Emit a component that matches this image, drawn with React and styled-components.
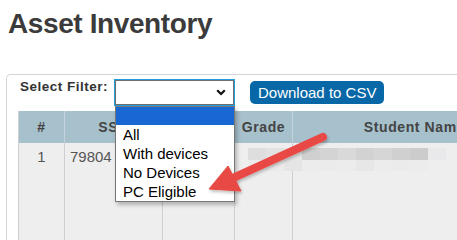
import React from "react";
import styled, { createGlobalStyle } from "styled-components";

const Global = createGlobalStyle`
  html, body { margin: 0; padding: 0; background: #ffffff; }
  body { font-family: "Liberation Sans", Arial, sans-serif; }
`;

const Page = styled.div`
  position: relative;
  width: 457px;
  height: 240px;
  overflow: hidden;
  padding: 8px 0 0 6px;
  box-sizing: border-box;
`;

const Title = styled.h1`
  margin: 0;
  padding-left: 2px;
  font-size: 28px;
  line-height: 32px;
  font-weight: 700;
  letter-spacing: -0.4px;
  color: #3b3b3b;
`;

const Panel = styled.section`
  margin-top: 34px;
  width: 600px;
  border-top: 1px solid #d4d4d4;
  border-left: 1px solid #d4d4d4;
  border-radius: 5px 0 0 0;
  background: #ffffff;
`;

const Toolbar = styled.div`
  display: flex;
  align-items: flex-start;
  padding: 4px 0 0 13px;
`;

const Label = styled.label`
  width: 90px;
  font-size: 13.5px;
  line-height: 15px;
  font-weight: 700;
  letter-spacing: 0.5px;
  color: #333333;
  white-space: nowrap;
`;

const SelectWrap = styled.div`
  position: relative;
  margin-left: 4px;
`;

const SelectBox = styled.div`
  box-sizing: border-box;
  width: 119px;
  height: 25px;
  margin: 1px;
  border: 1px solid #6f6f6f;
  outline: 1px solid #1f9de0;
  background: #ffffff;
  display: flex;
  align-items: center;
  justify-content: flex-end;
  padding-right: 7px;
`;

const OptionList = styled.ul`
  position: absolute;
  top: 27px;
  left: 1px;
  width: 120px;
  box-sizing: border-box;
  margin: 0;
  padding: 0;
  list-style: none;
  background: #ffffff;
  border: 1px solid #777777;
  box-shadow: 2px 3px 4px rgba(0, 0, 0, 0.25);
  z-index: 2;
`;

const OptionItem = styled.li`
  height: ${(p) => (p.$first ? "18px" : "19px")};
  line-height: 19px;
  padding-left: 7px;
  font-size: 15px;
  color: #000000;
  background: ${(p) => (p.$active ? "#1967d2" : "transparent")};
  white-space: nowrap;
`;

const Button = styled.button`
  margin: 2px 0 0 15px;
  height: 23px;
  padding: 0 8px;
  border: none;
  border-radius: 5px;
  background: #0767a7;
  color: #ffffff;
  font-family: "Liberation Sans", Arial, sans-serif;
  font-size: 15px;
  line-height: 23px;
  white-space: nowrap;
`;

const TableWrap = styled.div`
  position: relative;
  margin: 5px 0 0 11px;
`;

const Table = styled.div`
  display: grid;
  grid-template-columns: 46px 98px 72px 58px 244px;
  border-left: 1px solid #cfcfcf;
`;

const HeadCell = styled.div`
  box-sizing: border-box;
  height: 32px;
  background: #a6c0cc;
  border-right: 1px solid #c3d3db;
  display: flex;
  align-items: center;
  justify-content: center;
  font-size: 14px;
  font-weight: 700;
  letter-spacing: 0.6px;
  color: #444444;
  white-space: nowrap;
`;

const BodyCell = styled.div`
  box-sizing: border-box;
  height: 120px;
  background: #eeeeee;
  border-right: 1px solid #cfcfcf;
  padding: 5px 5px 0;
  font-size: 15px;
  line-height: 17px;
  color: #555555;
  text-align: ${(p) => p.$align || "left"};
`;

const Mosaic = styled.div`
  position: absolute;
  left: 230px;
  top: 37px;
  display: flex;
  flex-direction: column;
`;

const MosaicRow = styled.div`
  display: flex;
  height: ${(p) => p.$h}px;
`;

const Tile = styled.div`
  width: 18px;
  background: ${(p) => p.$c};
`;

const ArrowLayer = styled.svg`
  position: absolute;
  left: 0;
  top: 0;
  pointer-events: none;
  z-index: 5;
`;

const Chevron = () => (
  <svg width="10" height="7" viewBox="0 0 10 7">
    <path d="M1.2 1.2 L5 5 L8.8 1.2" fill="none" stroke="#111" strokeWidth="2.2" />
  </svg>
);

const rowA = ["#dedede", "#e2e2e2", "#e6e6e6", "#d0d0d0", "#d4d4d4", "#d9d9d9", "#d2d2d2", "#d6d6d6", "#d0d0d0", "#cccccc", "#e9e9eb"];
const rowB = ["#ececec", "#ebebeb", "#e5e5e5", "#ececec", "#ebebeb", "#ececec", "#e7e7e7", "#ececec", "#ebebeb", "#ececec", "#eeeeee"];

const options = ["", "All", "With devices", "No Devices", "PC Eligible"];

export default function App() {
  return (
    <>
      <Global />
      <Page>
        <Title>Asset Inventory</Title>
        <Panel>
          <Toolbar>
            <Label>Select Filter:</Label>
            <SelectWrap>
              <SelectBox>
                <Chevron />
              </SelectBox>
              <OptionList>
                {options.map((o, i) => (
                  <OptionItem key={i} $active={i === 0} $first={i === 0}>
                    {o}
                  </OptionItem>
                ))}
              </OptionList>
            </SelectWrap>
            <Button>Download to CSV</Button>
          </Toolbar>
          <TableWrap>
            <Table>
              <HeadCell>#</HeadCell>
              <HeadCell>SSN</HeadCell>
              <HeadCell />
              <HeadCell>Grade</HeadCell>
              <HeadCell>Student Name</HeadCell>
              <BodyCell $align="center">1</BodyCell>
              <BodyCell>79804</BodyCell>
              <BodyCell />
              <BodyCell />
              <BodyCell />
            </Table>
            <Mosaic>
              <MosaicRow $h={12}>
                {rowA.map((c, i) => (
                  <Tile key={i} $c={c} />
                ))}
              </MosaicRow>
              <MosaicRow $h={11}>
                {rowB.map((c, i) => (
                  <Tile key={i} $c={c} />
                ))}
              </MosaicRow>
            </Mosaic>
          </TableWrap>
        </Panel>
        <ArrowLayer width="457" height="240" viewBox="0 0 457 240">
          <defs>
            <filter id="sh" x="-20%" y="-20%" width="140%" height="140%">
              <feDropShadow dx="1" dy="2" stdDeviation="1.5" floodColor="#000" floodOpacity="0.25" />
            </filter>
          </defs>
          <g filter="url(#sh)" fill="#e84a44" stroke="#e84a44">
            <line x1="323" y1="137" x2="233" y2="178" strokeWidth="8" strokeLinecap="round" />
            <polygon points="209,189 228,166 241,191" strokeWidth="1" strokeLinejoin="round" />
          </g>
        </ArrowLayer>
      </Page>
    </>
  );
}
